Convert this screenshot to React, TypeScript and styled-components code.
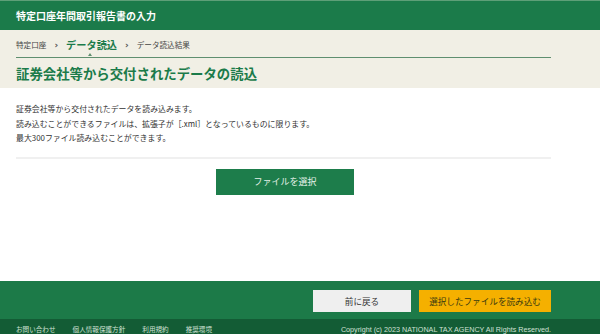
import React from "react";
import styled, { createGlobalStyle } from "styled-components";

const Global = createGlobalStyle`
  html, body { margin: 0; padding: 0; background: #ffffff; }
  body { font-family: "Noto Sans CJK JP", "Noto Sans", sans-serif; color: #333; }
  * { box-sizing: border-box; }
`;

const Page = styled.div`
  height: 334px;
  overflow: hidden;
  display: flex;
  flex-direction: column;
`;

const Header = styled.header`
  height: 30px;
  background: #1b7b4a;
  border-top: 1px solid #5e9f78;
  display: flex;
  align-items: center;
  padding: 0 16px;
  color: #fff;
  font-size: 10px;
  font-weight: 700;
`;

const Band = styled.section`
  background: #f1efe5;
  padding: 0 49px 0 16px;
  height: 58px;
  display: flex;
  flex-direction: column;
`;

const Crumbs = styled.nav`
  position: relative;
  height: 28px;
  display: flex;
  align-items: center;
  gap: 8px;
  padding-top: 2px;
  border-bottom: 1.5px solid #5f8f6f;
`;

const Crumb = styled.span<{ $current?: boolean }>`
  font-size: ${(p) => (p.$current ? "10.2px" : "7.6px")};
  font-weight: ${(p) => (p.$current ? 700 : 400)};
  color: ${(p) => (p.$current ? "#1b7b4a" : "#444")};
`;

const Sep = styled.span`
  font-size: 9px;
  font-weight: 700;
  color: #555;
  font-family: "DejaVu Sans", sans-serif;
`;

const Marker = styled.span`
  position: absolute;
  left: 72px;
  bottom: 1px;
  width: 0;
  height: 0;
  border-left: 2px solid transparent;
  border-right: 2px solid transparent;
  border-bottom: 3px solid #5f8f6f;
`;

const Title = styled.h1`
  margin: 0;
  flex: 1;
  display: flex;
  align-items: center;
  padding-bottom: 1px;
  font-size: 13.4px;
  font-weight: 700;
  color: #1b7b4a;
`;

const Main = styled.main`
  flex: 1;
  padding: 14px 49px 0 16px;
  display: flex;
  flex-direction: column;
`;

const Lead = styled.div`
  font-size: 7.9px;
  line-height: 14.5px;
  color: #333;
  padding-bottom: 11px;
  border-bottom: 2px solid #f0f0f0;
`;

const Center = styled.div`
  display: flex;
  justify-content: center;
  padding: 10px 0 0 3px;
`;

const PrimaryButton = styled.button`
  width: 138px;
  height: 26px;
  border: none;
  background: #1d7d4b;
  color: #e4f1e8;
  font-family: inherit;
  font-size: 9px;
  cursor: pointer;
`;

const ActionBar = styled.div`
  background: #1c7a48;
  height: 38px;
  display: flex;
  justify-content: flex-end;
  align-items: flex-start;
  gap: 8px;
  padding: 9px 49px 0 16px;
`;

const ActionButton = styled.button<{ $tone: "gray" | "orange" }>`
  height: 22px;
  width: ${(p) => (p.$tone === "gray" ? "98px" : "132px")};
  border: none;
  background: ${(p) => (p.$tone === "gray" ? "#efefef" : "#f5b000")};
  color: ${(p) => (p.$tone === "gray" ? "#333" : "#3a3a10")};
  font-family: inherit;
  font-size: 8.6px;
  cursor: pointer;
`;

const Bottom = styled.footer`
  background: #135c35;
  height: 15px;
  display: flex;
  align-items: flex-start;
  padding: 6px 49px 0 16px;
  color: #cfe0d4;
  font-size: 6.6px;
  line-height: 9px;
`;

const Links = styled.div`
  display: flex;
  gap: 17px;
  flex: 1;
`;

const Copy = styled.span`
  font-family: "Liberation Sans", Arial, sans-serif;
  font-size: 7.2px;
`;

export default function App() {
  return (
    <>
      <Global />
      <Page>
        <Header>特定口座年間取引報告書の入力</Header>
        <Band>
          <Crumbs>
            <Crumb>特定口座</Crumb>
            <Sep>›</Sep>
            <Crumb $current>データ読込</Crumb>
            <Sep>›</Sep>
            <Crumb>データ読込結果</Crumb>
            <Marker />
          </Crumbs>
          <Title>証券会社等から交付されたデータの読込</Title>
        </Band>
        <Main>
          <Lead>
            証券会社等から交付されたデータを読み込みます。
            <br />
            読み込むことができるファイルは、拡張子が［.xml］となっているものに限ります。
            <br />
            最大300ファイル読み込むことができます。
          </Lead>
          <Center>
            <PrimaryButton>ファイルを選択</PrimaryButton>
          </Center>
        </Main>
        <ActionBar>
          <ActionButton $tone="gray">前に戻る</ActionButton>
          <ActionButton $tone="orange">選択したファイルを読み込む</ActionButton>
        </ActionBar>
        <Bottom>
          <Links>
            <span>お問い合わせ</span>
            <span>個人情報保護方針</span>
            <span>利用規約</span>
            <span>推奨環境</span>
          </Links>
          <Copy>Copyright (c) 2023 NATIONAL TAX AGENCY All Rights Reserved.</Copy>
        </Bottom>
      </Page>
    </>
  );
}
